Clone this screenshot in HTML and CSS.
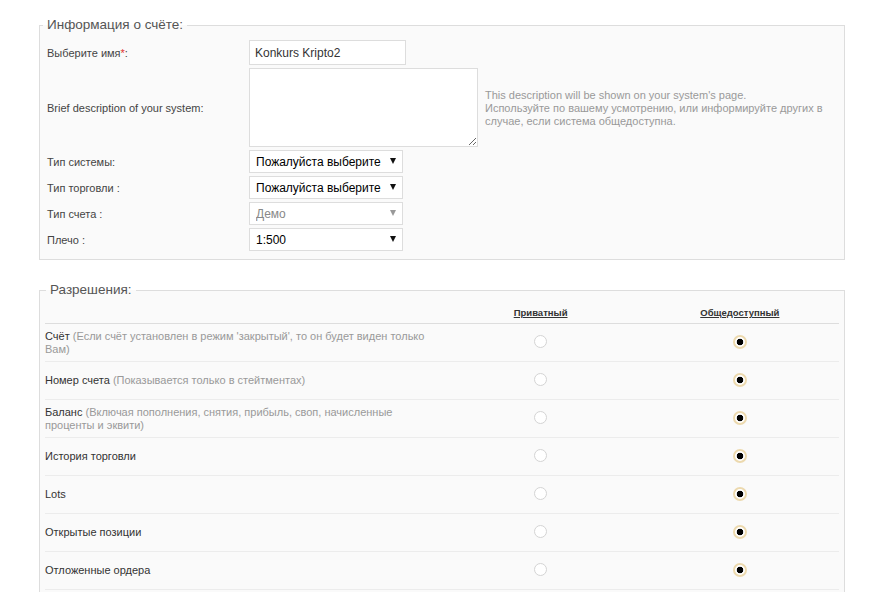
FILE: index.html
```html
<!DOCTYPE html>
<html lang="ru">
<head>
<meta charset="utf-8">
<title>Информация о счёте</title>
<link rel="stylesheet" href="styles.css">
</head>
<body>
<div class="page">
  <fieldset class="box box-info">
    <legend class="box-title">Информация о счёте:</legend>
    <div class="form">
      <label class="lbl">Выберите имя<span class="req">*</span>:</label>
      <div class="field"><input class="text" type="text" value="Konkurs Kripto2"></div>
      <div></div>

      <label class="lbl">Brief description of your system:</label>
      <div class="field"><textarea class="area"></textarea></div>
      <div class="hint">This description will be shown on your system's page.<br>Используйте по вашему усмотрению, или информируйте других в случае, если система общедоступна.</div>

      <label class="lbl">Тип системы:</label>
      <div class="field"><span class="sel"><select><option>Пожалуйста выберите</option></select></span></div>
      <div></div>

      <label class="lbl">Тип торговли :</label>
      <div class="field"><span class="sel"><select><option>Пожалуйста выберите</option></select></span></div>
      <div></div>

      <label class="lbl">Тип счета :</label>
      <div class="field"><span class="sel sel-off"><select disabled><option>Демо</option></select></span></div>
      <div></div>

      <label class="lbl">Плечо :</label>
      <div class="field"><span class="sel"><select><option>1:500</option></select></span></div>
      <div></div>
    </div>
  </fieldset>

  <fieldset class="box box-perm">
    <legend class="box-title">Разрешения:</legend>
    <table class="perm">
      <thead>
        <tr>
          <th class="c-name"></th>
          <th class="c-opt"><span class="th-link">Приватный</span></th>
          <th class="c-opt c-last"><span class="th-link">Общедоступный</span></th>
        </tr>
      </thead>
      <tbody>
        <tr>
          <td class="c-name">Счёт <span class="note">(Если счёт установлен в режим 'закрытый', то он будет виден только Вам)</span></td>
          <td class="c-opt"><span class="radio"></span></td>
          <td class="c-opt c-last"><span class="radio on"></span></td>
        </tr>
        <tr>
          <td class="c-name">Номер счета <span class="note">(Показывается только в стейтментах)</span></td>
          <td class="c-opt"><span class="radio"></span></td>
          <td class="c-opt c-last"><span class="radio on"></span></td>
        </tr>
        <tr>
          <td class="c-name">Баланс <span class="note">(Включая пополнения, снятия, прибыль, своп, начисленные проценты и эквити)</span></td>
          <td class="c-opt"><span class="radio"></span></td>
          <td class="c-opt c-last"><span class="radio on"></span></td>
        </tr>
        <tr>
          <td class="c-name">История торговли</td>
          <td class="c-opt"><span class="radio"></span></td>
          <td class="c-opt c-last"><span class="radio on"></span></td>
        </tr>
        <tr>
          <td class="c-name">Lots</td>
          <td class="c-opt"><span class="radio"></span></td>
          <td class="c-opt c-last"><span class="radio on"></span></td>
        </tr>
        <tr>
          <td class="c-name">Открытые позиции</td>
          <td class="c-opt"><span class="radio"></span></td>
          <td class="c-opt c-last"><span class="radio on"></span></td>
        </tr>
        <tr>
          <td class="c-name">Отложенные ордера</td>
          <td class="c-opt"><span class="radio"></span></td>
          <td class="c-opt c-last"><span class="radio on"></span></td>
        </tr>
      </tbody>
    </table>
  </fieldset>
</div>
</body>
</html>
```

FILE: styles.css
```css
html, body {
  margin: 0;
  padding: 0;
  background: #ffffff;
  font-family: "Liberation Sans", Arial, sans-serif;
  font-size: 11px;
  color: #333;
}

.page {
  padding: 17px 26px 0 39px;
}

.box {
  margin: 0;
  border: 1px solid #dddddd;
  background: #fafafa;
  min-width: 0;
}

.box-title {
  font-size: 13.5px;
  line-height: 16px;
  color: #555;
  padding: 0 4px;
  margin-left: -4px;
}

.box-info {
  padding: 7px 7px 8px 7px;
}

.box-perm {
  margin-top: 22px;
  padding: 0 5px 24px 5px;
}

.box-perm .box-title {
  margin-left: 1px;
}

.form {
  display: grid;
  grid-template-columns: 202px auto 1fr;
  row-gap: 3px;
  align-items: center;
}

.lbl {
  color: #444;
  font-size: 11px;
}

.req {
  color: #e03030;
}

.field {
  display: flex;
}

.text {
  box-sizing: border-box;
  width: 157px;
  height: 25px;
  border: 1px solid #dddddd;
  background: #fff;
  padding: 0 5px;
  margin: 0;
  font-family: "Liberation Sans", Arial, sans-serif;
  font-size: 12px;
  color: #333;
  outline: none;
}

.area {
  box-sizing: border-box;
  width: 229px;
  height: 79px;
  border: 1px solid #dddddd;
  background: #fff;
  margin: 0;
  padding: 2px;
  display: block;
  outline: none;
}

.hint {
  padding-left: 7px;
  width: 345px;
  color: #999;
  font-size: 11px;
  line-height: 13px;
  padding-top: 1px;
}

.sel {
  position: relative;
  display: block;
  width: 154px;
  height: 23px;
}

.sel select {
  -webkit-appearance: none;
  appearance: none;
  box-sizing: border-box;
  width: 100%;
  height: 23px;
  margin: 0;
  border: 1px solid #dddddd;
  border-radius: 0;
  background: #fff;
  padding: 0 0 0 6px;
  font-family: "Liberation Sans", Arial, sans-serif;
  font-size: 12px;
  color: #000;
  outline: none;
}

.sel::after {
  content: "";
  position: absolute;
  right: 7px;
  top: 8px;
  width: 0;
  height: 0;
  border-left: 3.5px solid transparent;
  border-right: 3.5px solid transparent;
  border-top: 6px solid #111;
  pointer-events: none;
}

.sel-off select {
  color: #888;
  opacity: 1;
}

.sel-off::after {
  border-top-color: #999;
}

.perm {
  width: 100%;
  border-collapse: collapse;
  table-layout: fixed;
}

.perm th {
  height: 22px;
  padding: 3px 0 0 0;
  border-bottom: 1px solid #dddddd;
  vertical-align: middle;
  font-weight: normal;
}

.th-link {
  font-size: 9.5px;
  font-weight: bold;
  color: #333;
  text-decoration: underline;
}

.perm td {
  height: 37px;
  padding: 0;
  border-bottom: 1px solid #ececec;
  vertical-align: middle;
  line-height: 13px;
  color: #333;
}

.c-name {
  width: 385px;
  padding-right: 10px !important;
  text-align: left;
}

.c-opt {
  width: 200px;
  text-align: center;
}

.c-last {
  width: 198px;
}

.note {
  color: #999;
}

.radio {
  display: inline-block;
  box-sizing: border-box;
  width: 13px;
  height: 13px;
  border-radius: 50%;
  border: 1px solid #d4d4d4;
  background: #fff;
  vertical-align: middle;
  position: relative;
  top: -1px;
}

.radio.on {
  width: 14px;
  height: 14px;
  border: 2px solid #ecd9ae;
  background: radial-gradient(circle, #000 0, #000 3px, #fff 3.6px);
}
```
